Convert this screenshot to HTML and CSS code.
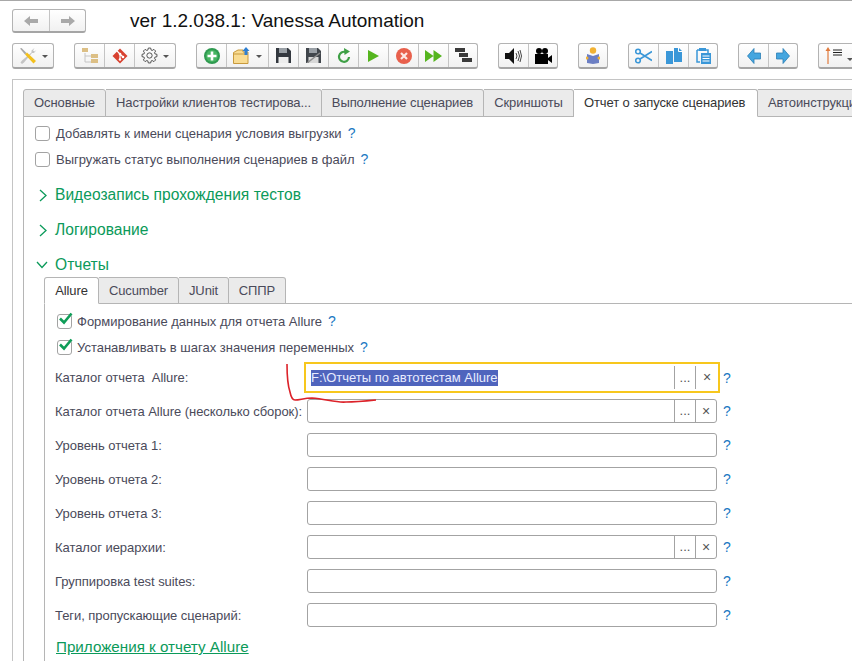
FILE: index.html
```html
<!DOCTYPE html>
<html lang="ru">
<head>
<meta charset="utf-8">
<title>Vanessa Automation</title>
<link rel="stylesheet" href="styles.css">
</head>
<body>

<div class="head">
	<div class="btns nav">
		<span class="btn w36"><svg width="16" height="14" viewBox="0 0 16 14"><path d="M1 7l6-5v3h8v4H7v3z" fill="#a9a9a9"/></svg></span>
		<span class="btn w36"><svg width="16" height="14" viewBox="0 0 16 14"><path d="M15 7L9 2v3H1v4h8v3z" fill="#a9a9a9"/></svg></span>
	</div>
	<div class="title">ver 1.2.038.1: Vanessa Automation</div>
</div>

<div class="toolbar">
	<div class="btns g1">
		<span class="btn w40"><svg width="18" height="18" viewBox="0 0 18 18"><path d="M15.500 1l-3 2.500v2L3 13.500l-1.500 2L3 17l2-1.500 8-9.500h2l2.500-3-2 1.500L14 3.500z" fill="#c4c4c4"/><path d="M1 1.500L2.500 1l5 5L6 7.500z" fill="#a8a8a8"/><path d="M6 7.500L8 5.500l9 8.500-2.500 2.500z" fill="#f3c01d"/></svg><i class="caret"></i></span>
	</div>
	<div class="btns g2">
		<span class="btn w29"><svg width="18" height="18" viewBox="0 0 18 18"><path d="M4 6v9h6M4 9h6" fill="none" stroke="#c4c4c4"/><rect x="1" y="1" width="6" height="4" fill="#dcbf85"/><rect x="10" y="7" width="7" height="4" fill="#dcbf85"/><rect x="10" y="12" width="7" height="4" fill="#dcbf85"/></svg></span>
		<span class="btn w30"><svg width="16" height="16" viewBox="0 0 16 16"><path d="M8 .5L15.500 8 8 15.500.5 8z" fill="#d8412f"/><path d="M5 3l3 3M8 6v6M8 6l3 3" stroke="#fff" stroke-width="1.200"/><circle cx="8" cy="6" r="1.300" fill="#fff"/><circle cx="8" cy="11.500" r="1.300" fill="#fff"/><circle cx="11" cy="9" r="1.300" fill="#fff"/></svg></span>
		<span class="btn w41"><svg width="17" height="17" viewBox="0 0 18 18" fill="none" stroke="#4a4a4a"><circle cx="9" cy="9" r="2.800"/><path d="M14.740 7.250L16.900 7.750V10.250L14.740 10.750L14.300 11.820L15.470 13.700L13.700 15.470L11.820 14.300L10.750 14.740L10.250 16.900H7.750L7.250 14.740L6.180 14.300L4.300 15.470L2.530 13.700L3.700 11.820L3.260 10.750L1.100 10.250V7.750L3.260 7.250L3.700 6.180L2.530 4.300L4.300 2.530L6.180 3.700L7.250 3.260L7.750 1.100H10.250L10.750 3.260L11.820 3.700L13.700 2.530L15.470 4.300L14.300 6.180z"/></svg><i class="caret"></i></span>
	</div>
	<div class="btns g3">
		<span class="btn w29"><svg width="16" height="16" viewBox="0 0 16 16"><circle cx="8" cy="8" r="8" fill="#2f9a50"/><circle cx="8" cy="8" r="6" fill="#47b562"/><path d="M8 3.500v9M3.500 8h9" stroke="#fff" stroke-width="2.600"/></svg></span>
		<span class="btn w42"><svg width="18" height="17" viewBox="0 0 18 17"><path d="M.5 16.500V5.500L5 3h5v2h5v11.500z" fill="#f9dc92" stroke="#c89a3e"/><path d="M.5 7h14" stroke="#c89a3e"/><path d="M11.500 8V4H9.500L13 0l3.500 4h-2v4z" fill="#2f7fd1"/></svg><i class="caret"></i></span>
		<span class="btn w30"><svg width="15" height="15" viewBox="0 0 15 15"><path d="M0 0h12l3 3v12H0z" fill="#33383f"/><rect x="3" y="0" width="8" height="5" fill="#9aa0a6"/><rect x="2.500" y="9" width="10" height="6" fill="#ececec"/></svg></span>
		<span class="btn w30"><svg width="15" height="15" viewBox="0 0 15 15"><path d="M0 0h12l3 3v12H0z" fill="#41464c"/><rect x="3" y="0" width="8" height="5" fill="#9aa0a6"/><rect x="2.500" y="9" width="10" height="6" fill="#d8d8d8"/><path d="M1 15L14 5" stroke="#8d8d8d" stroke-width="1.500"/></svg></span>
		<span class="btn w30"><svg width="14" height="15" viewBox="0 0 14 15" fill="none"><path d="M12 9A5 5 0 1 1 8.500 4" stroke="#3fa046" stroke-width="2.200"/><path d="M7 0l6 3.500-5.500 3.500z" fill="#3fa046"/></svg></span>
		<span class="btn w30"><svg width="11" height="12" viewBox="0 0 11 12"><path d="M0 0l11 6-11 6z" fill="#55b51e"/></svg></span>
		<span class="btn w30"><svg width="16" height="16" viewBox="0 0 16 16"><circle cx="8" cy="8" r="8" fill="#e8604c"/><path d="M5 5l6 6M11 5l-6 6" stroke="#fde8e4" stroke-width="2.200"/></svg></span>
		<span class="btn w30"><svg width="17" height="12" viewBox="0 0 17 12"><path d="M0 0l8.500 6L0 12zM8.500 0L17 6l-8.500 6z" fill="#55b51e"/></svg></span>
		<span class="btn w29"><svg width="17" height="15" viewBox="0 0 17 15"><path d="M0 0h10v4H0zM4 5h9v4H4zM7 10h10v4H7z" fill="#3a3a3a"/></svg></span>
	</div>
	<div class="btns g4">
		<span class="btn w29"><svg width="17" height="16" viewBox="0 0 17 16"><path d="M0 5h4l5-5v16l-5-5H0z" fill="#111"/><path d="M11 5q2 3 0 6M13 3q3 5 0 10M15 2q3 6 0 12" fill="none" stroke="#444"/></svg></span>
		<span class="btn w29"><svg width="17" height="16" viewBox="0 0 17 16"><circle cx="4" cy="3" r="3" fill="#000"/><circle cx="10" cy="3" r="3" fill="#000"/><path d="M0 6h13v10H0zM13 10l4-3v8l-4-3z" fill="#000"/></svg></span>
	</div>
	<div class="btns g5">
		<span class="btn w28"><svg width="14" height="17" viewBox="0 0 14 17"><circle cx="7" cy="3.500" r="3.200" fill="#f2b233"/><path d="M1 7l6 2 6-2v9l-6 1-6-1z" fill="#6c7fc4"/><circle cx="1" cy="11" r="1.500" fill="#f2b233"/><circle cx="13" cy="11" r="1.500" fill="#f2b233"/></svg></span>
	</div>
	<div class="btns g6">
		<span class="btn w29"><svg width="17" height="16" viewBox="0 0 17 16" fill="none" stroke="#3a97d8" stroke-width="1.600"><circle cx="3" cy="3.500" r="2.300"/><circle cx="3" cy="12.500" r="2.300"/><path d="M5 5l12 7.500M5 11L17 3.500"/></svg></span>
		<span class="btn w30"><svg width="16" height="16" viewBox="0 0 16 16"><path d="M0 3h7v13H0z" fill="#3a97d8"/><path d="M8 0h5l3 3v11H8z" fill="#3a97d8"/><path d="M12.500 0v3.500H16" fill="none" stroke="#fff"/></svg></span>
		<span class="btn w29"><svg width="15" height="16" viewBox="0 0 15 16"><path d="M1 2h3M10 2h2v3M1 2v12h3" fill="none" stroke="#3a97d8" stroke-width="1.500"/><rect x="3" y="0" width="7" height="3" fill="#3a97d8"/><rect x="5" y="5" width="10" height="11" fill="#3a97d8"/><path d="M6.500 8h7M6.500 10.500h7M6.500 13h7" stroke="#fff"/></svg></span>
	</div>
	<div class="btns g7">
		<span class="btn w29"><svg width="14" height="16" viewBox="0 0 14 16"><path d="M.5 8L7 .5V5h6.500v6H7v4.500z" fill="#45a6df" stroke="#2b7fb5" stroke-width=".8"/></svg></span>
		<span class="btn w29"><svg width="14" height="16" viewBox="0 0 14 16"><path d="M13.500 8L7 .5V5H.5v6H7v4.500z" fill="#45a6df" stroke="#2b7fb5" stroke-width=".8"/></svg></span>
	</div>
	<div class="btns g8">
		<span class="btn to-edge"><svg width="18" height="17" viewBox="0 0 18 17"><path d="M3 3v14" stroke="#e07a3c" stroke-width="1.200"/><path d="M3 0l2.500 4h-5z" fill="#e07a3c"/><path d="M8 3h9M8 5.500h9M8 8h9" stroke="#222" stroke-width="1.200"/></svg><i class="caret"></i></span>
	</div>
</div>

<div class="frame">
	<div class="tabs tabs-main">
		<span class="tab m1">Основные</span>
		<span class="tab m2">Настройки клиентов тестирова...</span>
		<span class="tab m3">Выполнение сценариев</span>
		<span class="tab m4">Скриншоты</span>
		<span class="tab m5 active">Отчет о запуске сценариев</span>
		<span class="tab m6">Автоинструкции</span>
	</div>
	<div class="page">
		<label class="check c1"><i class="box"></i>Добавлять к имени сценария условия выгрузки<b class="q">?</b></label>
		<label class="check c2"><i class="box"></i>Выгружать статус выполнения сценариев в файл<b class="q">?</b></label>

		<div class="group g-video"><svg class="chev" width="9" height="13" viewBox="0 0 9 13"><path d="M1 1l6 5.500L1 12" fill="none" stroke="#0b9a5a" stroke-width="1.300"/></svg>Видеозапись прохождения тестов</div>
		<div class="group g-log"><svg class="chev" width="9" height="13" viewBox="0 0 9 13"><path d="M1 1l6 5.500L1 12" fill="none" stroke="#0b9a5a" stroke-width="1.300"/></svg>Логирование</div>
		<div class="group g-rep"><svg class="chev open" width="12" height="8" viewBox="0 0 12 8"><path d="M1 1l5 5.500L11 1" fill="none" stroke="#0b9a5a" stroke-width="1.300"/></svg>Отчеты</div>

		<div class="inner">
			<div class="tabs tabs-sub">
				<span class="tab s1 active">Allure</span>
				<span class="tab s2">Cucumber</span>
				<span class="tab s3">JUnit</span>
				<span class="tab s4">СППР</span>
			</div>
			<div class="sub-page">
				<label class="check c3"><i class="box"><svg width="15" height="13" viewBox="0 0 15 13"><path d="M2 6.500l4 4L13.500 1.500" fill="none" stroke="#0f9d58" stroke-width="2.600"/></svg></i>Формирование данных для отчета Allure<b class="q">?</b></label>
				<label class="check c4"><i class="box"><svg width="15" height="13" viewBox="0 0 15 13"><path d="M2 6.500l4 4L13.500 1.500" fill="none" stroke="#0f9d58" stroke-width="2.600"/></svg></i>Устанавливать в шагах значения переменных<b class="q">?</b></label>

				<div class="field first">
					<span class="lbl">Каталог отчета&nbsp; Allure:</span>
					<div class="input focus"><span class="val"><span class="sel">F:\Отчеты по автотестам Allure</span></span><span class="ib">...</span><span class="ib x">×</span></div>
					<b class="q">?</b>
					<svg class="scribble" width="92" height="40" viewBox="0 0 92 40"><path d="M1 0C1 10 2 22 4 28C5 33 6 36 9 36C14 36 18 34 26 34C40 35 50 39 60 38C70 38 80 37 90 36" fill="none" stroke="#dc2229" stroke-width="1.600"/></svg>
				</div>
				<div class="field">
					<span class="lbl">Каталог отчета Allure (несколько сборок):</span>
					<div class="input"><span class="val"></span><span class="ib">...</span><span class="ib x">×</span></div>
					<b class="q">?</b>
				</div>
				<div class="field"><span class="lbl">Уровень отчета 1:</span><div class="input"></div><b class="q">?</b></div>
				<div class="field"><span class="lbl">Уровень отчета 2:</span><div class="input"></div><b class="q">?</b></div>
				<div class="field"><span class="lbl">Уровень отчета 3:</span><div class="input"></div><b class="q">?</b></div>
				<div class="field">
					<span class="lbl">Каталог иерархии:</span>
					<div class="input"><span class="val"></span><span class="ib">...</span><span class="ib x">×</span></div>
					<b class="q">?</b>
				</div>
				<div class="field"><span class="lbl">Группировка test suites:</span><div class="input"></div><b class="q">?</b></div>
				<div class="field"><span class="lbl">Теги, пропускающие сценарий:</span><div class="input"></div><b class="q">?</b></div>

				<a class="sub-link" href="#">Приложения к отчету Allure</a>
			</div>
		</div>
	</div>
</div>

</body>
</html>
```

FILE: styles.css
```css
* {margin:0;padding:0;box-sizing:border-box;}

html,body {height:661px;overflow:hidden;}
body {background:#fff;font-family:"Liberation Sans",Arial,sans-serif;font-size:13px;color:#4a4a5a;border-top:1px solid #a8a8a8;}

.btns {display:flex;flex:none;height:26px;border:1px solid #b3b3b3;border-bottom:2px solid #a5a5a5;border-radius:3px;background:linear-gradient(#fff,#f1f1f1);}
.btn {display:flex;flex:none;align-items:center;justify-content:center;border-left:1px solid #c4c4c4;}
.btn:first-child {border-left:0;}
.w28 {width:28px;}
.w29 {width:29px;}
.w30 {width:30px;}
.w36 {width:36px;}
.w40 {width:40px;}
.w41 {width:41px;}
.w42 {width:42px;}
.caret {width:0;height:0;margin-left:5px;margin-top:2px;border:3px solid transparent;border-top:3px solid #555;border-bottom:0;}

.head {display:flex;align-items:center;height:24px;margin-top:8px;padding-left:12px;}
.nav {height:24px;}
.title {margin-left:44px;font-size:19px;color:#111;}

.toolbar {display:flex;gap:20px;height:26px;margin-top:10px;padding-left:12px;overflow:hidden;}
.to-edge {width:50px;justify-content:flex-start;padding-left:6px;}
.to-edge .caret {margin-left:4px;margin-top:8px;}

.frame {margin:10px 0 0 12px;height:600px;border:1px solid #c4c4c4;border-right:0;padding:9px 0 0 10px;}

.tabs {display:flex;position:relative;z-index:1;}
.tab {display:block;flex:none;white-space:nowrap;text-align:center;letter-spacing:-.1px;background:#ebebeb;border:1px solid #b5b5b5;border-left:0;border-radius:0 3px 0 0;color:#4a4a5a;}
.tab:first-child {border-left:1px solid #b5b5b5;border-radius:3px 3px 0 0;}
.tabs-main {height:28px;}
.tabs-main .tab {height:28px;line-height:26px;}
.m1 {width:83px;}
.m2 {width:216px;}
.m3 {width:162px;}
.m4 {width:90px;}
.tabs-main .m5 {width:184px;padding-left:10px;text-align:left;}
.tabs-main .m6 {width:120px;padding-left:10px;text-align:left;}
.tab.active {background:#fff;border-bottom-color:#fff;color:#333;}

.page {border-left:1px solid #b5b5b5;border-top:1px solid #b5b5b5;margin-top:-1px;height:560px;padding-left:11px;overflow:hidden;}

.check {display:flex;align-items:center;height:16px;}
.box {display:block;position:relative;flex:none;width:15px;height:15px;margin-right:6px;border:1px solid #a3a3a3;border-radius:3px;background:#fff;}
.box svg {position:absolute;left:0;top:-3px;}
.q {margin-left:6px;font-weight:normal;font-size:14px;color:#1a78c2;}
.c1 {margin-top:8px;}
.c2 {margin-top:10px;}

.group {display:flex;align-items:center;height:20px;font-size:15.6px;color:#0b9a5a;}
.chev {flex:none;margin:0 7px 0 4px;}
.chev.open {margin:0 7px 0 1px;}
.g-video {margin-top:18px;}
.g-log {margin-top:15px;}
.g-rep {margin-top:15px;}

.inner {margin:2px 0 0 9px;}
.tabs-sub {height:27px;}
.tabs-sub .tab {height:27px;line-height:26px;}
.s1 {width:55px;}
.s2 {width:80px;}
.s3 {width:50px;}
.s4 {width:57px;}
.sub-page {border-left:1px solid #b5b5b5;border-top:1px solid #b5b5b5;margin-top:-1px;height:400px;padding-left:10px;}
.sub-page .box {margin-left:2px;margin-right:5px;}
.c3 {margin-top:9px;}
.c4 {margin-top:10px;}

.field {position:relative;display:flex;align-items:center;height:24px;margin-top:10px;}
.field.first {height:31px;margin-top:7px;margin-bottom:-4px;}
.lbl {flex:none;width:252px;white-space:nowrap;letter-spacing:-.05px;}
.input {display:flex;flex:none;width:410px;height:24px;border:1px solid #a3a3a3;border-radius:3px;background:#fff;}
.val {flex:1;min-width:0;}
.ib {flex:none;width:21px;border-left:1px solid #a3a3a3;text-align:center;line-height:22px;color:#555;}
.ib.x {font-size:14px;}
.input.focus {width:416px;height:31px;margin-left:-3px;padding:2px 0;border:2px solid #f7c71d;border-radius:0;}
.input.focus .ib {line-height:23px;}
.input.focus .ib.x {width:23px;}
.input.focus .val {padding-left:5px;line-height:23px;overflow:hidden;white-space:nowrap;}
.sel {display:inline-block;height:16px;line-height:16px;background:#4f64bd;color:#e8ecff;}
.field > .q {margin-left:6px;}
.first > .q {margin-left:3px;}
.scribble {position:absolute;left:231px;top:2px;z-index:1;}

.sub-link {display:inline-block;margin-top:11px;margin-left:1px;font-size:15.2px;color:#0b9a5a;text-decoration:underline;}
```
